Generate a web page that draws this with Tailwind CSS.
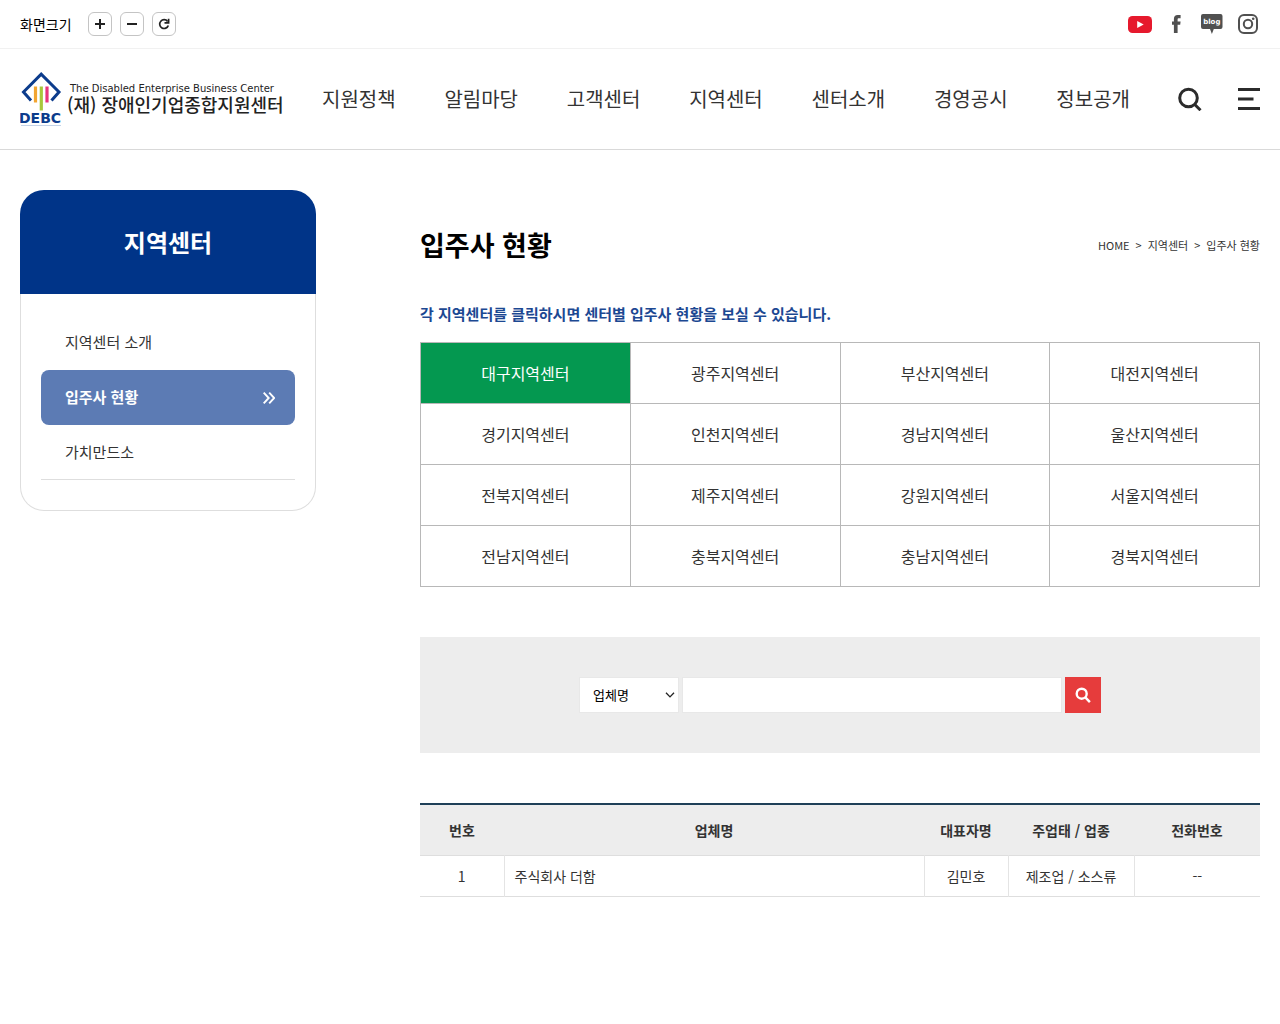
<!DOCTYPE html>
<html lang="ko">
<head>
<meta charset="utf-8">
<meta name="viewport" content="width=device-width, initial-scale=1">
<title>입주사 현황 | (재)장애인기업종합지원센터</title>
<script src="https://cdn.jsdelivr.net/npm/@tailwindcss/browser@4"></script>
</head>
<body class="min-h-screen bg-white font-['Noto_Sans_CJK_KR',sans-serif] text-[#333]">

<!-- Utility bar -->
<div class="flex h-[49px] items-center justify-between border-b border-[#f1f1f1] px-5">
  <div class="flex items-center gap-2">
    <span class="mr-2 text-sm text-black">화면크기</span>
    <button type="button" aria-label="확대" class="flex size-6 items-center justify-center rounded-md border border-[#c4c4c4]">
      <svg class="size-3" viewBox="0 0 12 12" fill="none" stroke="#222" stroke-width="2"><path d="M6 1v10M1 6h10"/></svg>
    </button>
    <button type="button" aria-label="축소" class="flex size-6 items-center justify-center rounded-md border border-[#c4c4c4]">
      <svg class="size-3" viewBox="0 0 12 12" fill="none" stroke="#222" stroke-width="2"><path d="M1 6h10"/></svg>
    </button>
    <button type="button" aria-label="초기화" class="flex size-6 items-center justify-center rounded-md border border-[#c4c4c4]">
      <svg class="size-3" viewBox="0 0 12 12" fill="none" stroke="#222" stroke-width="1.7"><path d="M9.6 3.4A4.4 4.4 0 1 0 10.3 7.4"/><path d="M10.6 .8v4.1H6.5"/></svg>
    </button>
  </div>
  <div class="flex items-center gap-3">
    <a href="#" aria-label="YouTube"><svg class="h-6 w-6" viewBox="0 0 24 24"><rect y="4" width="24" height="17" rx="4.5" fill="#e6192d"/><path d="M9.2 9v7l6.5-3.5z" fill="#fff"/></svg></a>
    <a href="#" aria-label="Facebook"><svg class="h-6 w-6" viewBox="0 0 24 24"><path d="M9.900 21v-8.300H8V9.400h1.900V7c0-2.800 1.400-4 3.700-4h3v3.200h-1.800c-.9 0-1.200.4-1.200 1.200v2h3l-.4 3.300h-2.600V21z" fill="#505050"/></svg></a>
    <a href="#" aria-label="Blog"><svg class="h-6 w-6" viewBox="0 0 24 24"><path d="M3 2h17.500a2 2 0 0 1 2 2v11a2 2 0 0 1-2 2h-6.700L11.900 22 10 17H3a2 2 0 0 1-2-2V4a2 2 0 0 1 2-2z" fill="#505050"/><text x="11.800" y="12" text-anchor="middle" font-family="DejaVu Sans" font-weight="700" font-size="7" fill="#fff">blog</text></svg></a>
    <a href="#" aria-label="Instagram"><svg class="h-6 w-6" viewBox="0 0 24 24" fill="none" stroke="#505050" stroke-width="2"><rect x="3" y="3" width="18" height="18" rx="5"/><circle cx="12" cy="12" r="4.200"/><circle cx="17.200" cy="6.800" r="1.300" fill="#505050" stroke="none"/></svg></a>
  </div>
</div>

<!-- Header -->
<header class="flex h-[101px] items-center border-b border-[#d9d9d9] px-5">
  <a href="#" aria-label="(재)장애인기업종합지원센터" class="shrink-0">
    <svg class="h-14 w-[266px]" viewBox="0 0 266 56">
      <path d="M11 29.500 3.500 21 21.200 3.200 39 21l-7.500 8.500" fill="none" stroke="#0c3c8c" stroke-width="3"/>
      <g stroke-width="3.200">
        <path d="M15.500 15.500v16" stroke="#f2a531"/>
        <path d="M21.300 15.500v24" stroke="#a7c83b"/>
        <path d="M27 15.500v16" stroke="#e7357c"/>
      </g>
      <text x="-1" y="52" font-family="DejaVu Sans" font-weight="700" font-size="14" fill="#0c3c8c">DEBC</text>
      <path d="M1 54.500h40" stroke="#c5d3e8" stroke-width="1"/>
      <text x="50" y="21" font-family="DejaVu Sans" font-size="10" fill="#222">The Disabled Enterprise Business Center</text>
      <text x="47" y="41" font-family="Noto Sans CJK KR" font-weight="500" font-size="18" fill="#222">(재) 장애인기업종합지원센터</text>
    </svg>
  </a>
  <nav class="ml-9 flex-1">
    <ul class="flex justify-between text-xl">
      <li><a href="#">지원정책</a></li>
      <li><a href="#">알림마당</a></li>
      <li><a href="#">고객센터</a></li>
      <li><a href="#">지역센터</a></li>
      <li><a href="#">센터소개</a></li>
      <li><a href="#">경영공시</a></li>
      <li><a href="#">정보공개</a></li>
    </ul>
  </nav>
  <button type="button" aria-label="검색" class="ml-12">
    <svg class="size-6" viewBox="0 0 24 24" fill="none" stroke="#2b2b2b" stroke-width="3"><circle cx="10.500" cy="11" r="8.800"/><path d="m16.500 17.200 6 6"/></svg>
  </button>
  <button type="button" aria-label="전체메뉴" class="ml-9">
    <svg class="h-6 w-[22px]" viewBox="0 0 22 24" fill="#2b2b2b"><path d="M0 1h22v3H0zM0 10.500h15.500v3H0zM0 20h22v3H0z"/></svg>
  </button>
</header>

<div class="flex items-start gap-[104px] px-5 pt-10">
  <!-- Side menu -->
  <aside class="w-[296px] shrink-0">
    <h2 class="flex h-[104px] items-center justify-center rounded-t-3xl bg-[#003488] text-2xl font-bold text-white">지역센터</h2>
    <ul class="rounded-b-3xl border border-t-0 border-[#dedede] px-5 pt-5 pb-[30px] text-[15px]">
      <li><a href="#" class="flex h-14 items-center px-6">지역센터 소개</a></li>
      <li><a href="#" aria-current="page" class="flex h-[55px] items-center justify-between rounded-lg bg-[#5c7bb4] pr-5 pl-6 font-bold text-white">입주사 현황
        <svg class="size-3" viewBox="0 0 12 12" fill="none" stroke="#fff" stroke-width="1.900"><path d="m.7.700 5 5.300-5 5.300M6.200.700l5 5.300-5 5.300"/></svg></a></li>
      <li class="border-b border-[#dedede]"><a href="#" class="flex h-[54px] items-center px-6">가치만드소</a></li>
    </ul>
  </aside>

  <!-- Content -->
  <main class="min-w-0 flex-1 pt-9">
    <div class="flex items-center justify-between">
      <h1 class="text-[27px] leading-[38px] font-bold text-black">입주사 현황</h1>
      <nav aria-label="현재 위치">
        <ol class="flex items-center gap-1.5 text-[11px]">
          <li><a href="#">HOME</a></li><li>&gt;</li>
          <li><a href="#">지역센터</a></li><li>&gt;</li>
          <li>입주사 현황</li>
        </ol>
      </nav>
    </div>
    <p class="mt-[38px] text-[15px] leading-6 font-bold text-[#1c4892]">각 지역센터를 클릭하시면 센터별 입주사 현황을 보실 수 있습니다.</p>

    <ul class="mt-4 grid grid-cols-4 border-t border-l border-[#b8b8b8] text-center text-base leading-[60px]">
      <li class="border-r border-b border-[#b8b8b8]"><a href="#" class="block bg-[#049850] text-white">대구지역센터</a></li>
      <li class="border-r border-b border-[#b8b8b8]"><a href="#" class="block">광주지역센터</a></li>
      <li class="border-r border-b border-[#b8b8b8]"><a href="#" class="block">부산지역센터</a></li>
      <li class="border-r border-b border-[#b8b8b8]"><a href="#" class="block">대전지역센터</a></li>
      <li class="border-r border-b border-[#b8b8b8]"><a href="#" class="block">경기지역센터</a></li>
      <li class="border-r border-b border-[#b8b8b8]"><a href="#" class="block">인천지역센터</a></li>
      <li class="border-r border-b border-[#b8b8b8]"><a href="#" class="block">경남지역센터</a></li>
      <li class="border-r border-b border-[#b8b8b8]"><a href="#" class="block">울산지역센터</a></li>
      <li class="border-r border-b border-[#b8b8b8]"><a href="#" class="block">전북지역센터</a></li>
      <li class="border-r border-b border-[#b8b8b8]"><a href="#" class="block">제주지역센터</a></li>
      <li class="border-r border-b border-[#b8b8b8]"><a href="#" class="block">강원지역센터</a></li>
      <li class="border-r border-b border-[#b8b8b8]"><a href="#" class="block">서울지역센터</a></li>
      <li class="border-r border-b border-[#b8b8b8]"><a href="#" class="block">전남지역센터</a></li>
      <li class="border-r border-b border-[#b8b8b8]"><a href="#" class="block">충북지역센터</a></li>
      <li class="border-r border-b border-[#b8b8b8]"><a href="#" class="block">충남지역센터</a></li>
      <li class="border-r border-b border-[#b8b8b8]"><a href="#" class="block">경북지역센터</a></li>
    </ul>

    <form class="mt-[50px] flex items-center justify-center gap-[3px] bg-[#ededed] py-10">
      <div class="relative">
        <select aria-label="검색 조건" class="block h-9 w-[100px] appearance-none border border-[#e8e8e8] bg-white pl-[13px] text-[13px] text-black"><option>업체명</option></select>
        <svg class="pointer-events-none absolute top-[15px] right-1 h-1.5 w-[10px]" viewBox="0 0 10 6" fill="none" stroke="#222" stroke-width="1.300"><path d="m1 .700 4 4.200L9 .700"/></svg>
      </div>
      <input type="text" aria-label="검색어" class="h-9 w-[380px] border border-[#e8e8e8] bg-white px-3 text-[13px]">
      <button type="submit" aria-label="검색" class="flex size-9 items-center justify-center bg-[#e63c3c]">
        <svg class="size-4" viewBox="0 0 16 16" fill="none" stroke="#fff" stroke-width="2.400"><circle cx="6.700" cy="6.700" r="5"/><path d="m10.300 10.300 4.600 4.800"/></svg>
      </button>
    </form>

    <table class="mt-[50px] w-full table-fixed border-t-2 border-[#1f4058] text-center text-sm">
      <colgroup><col class="w-[10%]"><col class="w-[50%]"><col class="w-[10%]"><col class="w-[15%]"><col class="w-[15%]"></colgroup>
      <thead>
        <tr class="h-[51px] border-b border-[#dedede] bg-[#ededed]">
          <th scope="col">번호</th><th scope="col">업체명</th><th scope="col">대표자명</th><th scope="col">주업태 / 업종</th><th scope="col">전화번호</th>
        </tr>
      </thead>
      <tbody>
        <tr class="h-[41px] border-b border-[#dedede]">
          <td>1</td>
          <td class="border-l border-[#e4e4e4] pl-[10px] text-left">주식회사 더함</td>
          <td class="border-l border-[#e4e4e4]">김민호</td>
          <td class="border-l border-[#e4e4e4]">제조업 / 소스류</td>
          <td class="border-l border-[#e4e4e4]">--</td>
        </tr>
      </tbody>
    </table>
  </main>
</div>
</body>
</html>
